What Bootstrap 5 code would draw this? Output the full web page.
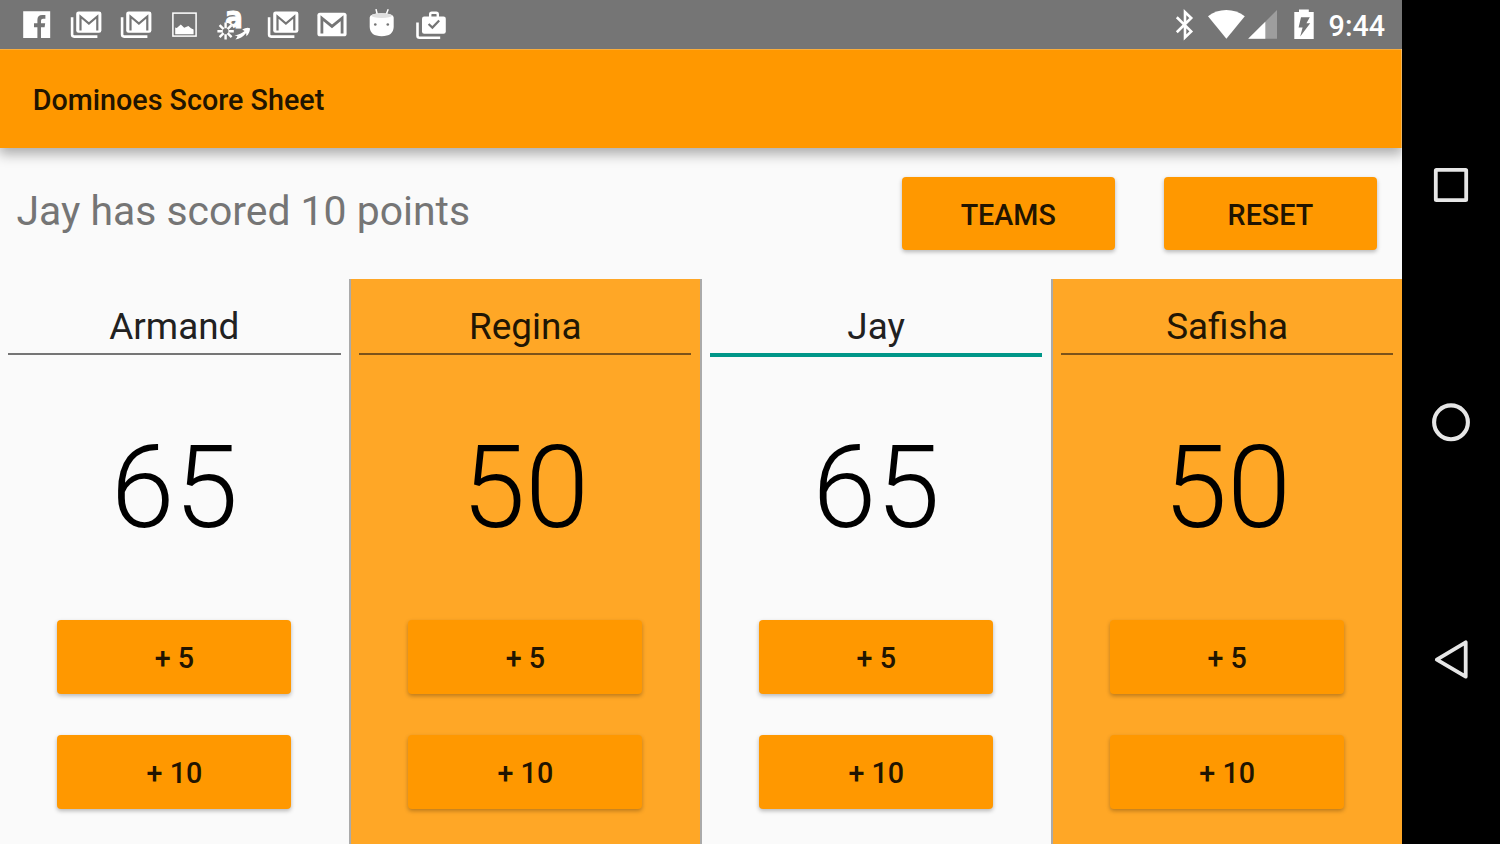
<!DOCTYPE html>
<html lang="en">
<head>
<meta charset="utf-8">
<meta name="viewport" content="width=device-width, initial-scale=1">
<title>Dominoes Score Sheet</title>
<link href="https://cdn.jsdelivr.net/npm/bootstrap@5.3.0/dist/css/bootstrap.min.css" rel="stylesheet">
<style>
  body { font-family: Roboto, "Liberation Sans", sans-serif; background: #fafafa; letter-spacing: 0; }
  .status-bar { height: 49.2px; background: #757575; padding-left: 12.3px; }
  .status-bar svg { display: block; flex: none; }
  .clock { font-size: 28.7px; font-weight: 500; line-height: 49px; margin-left: 13px; width: 73px; padding-top: 2px; }
  .app-bar { height: 98.4px; background: #ff9800; padding: 4px 0 0 32.8px; box-shadow: 0 5px 12px 1px rgba(0,0,0,.32); clip-path: inset(0 0 -30px 0); z-index: 2; }
  .app-title { font-size: 28.7px; font-weight: 500; color: #211400; line-height: 1; }
  .message-row { height: 131.4px; padding: 0 24.6px 0 16.4px; }
  .message-text { font-size: 40.9px; color: #757575; line-height: 48px; padding-bottom: 5px; }
  .btn-score { --bs-btn-bg: #ff9800; --bs-btn-color: #211400; --bs-btn-border-width: 0; --bs-btn-border-radius: 4px; --bs-btn-hover-bg: #fb8c00; --bs-btn-padding-x: 0; --bs-btn-padding-y: 0;
    --bs-btn-font-size: 28.7px; --bs-btn-font-weight: 500; --bs-btn-line-height: 73.8px; height: 73.8px; width: 234px; padding-top: 2.6px; box-shadow: 0 2px 4px rgba(0,0,0,.27); }
  .btn-action { width: 213.2px; }
  .actions { gap: 49px; padding-top: .6px; }
  .player { flex: 1 1 0; border-right: 2.05px solid #aaa; }
  .player:last-child { border-right: 0; }
  .player-alt { background: #ffa726; }
  .player-name { margin: 0 8.4px 0 8.2px; height: 76.4px; padding-top: 24px; font-size: 36.9px; line-height: 48px; color: #212121; border-bottom: 2px solid #757575; }
  .player-alt .player-name { color: #211604; border-color: #7c5219; }
  .player-name.focused { height: 78.4px; border-bottom: 4px solid #009688; margin-bottom: -2px; }
  .score { font-size: 114.8px; font-weight: 300; color: #000; line-height: 136px; margin-top: 64.4px; height: 200.1px; }
  .score-buttons { gap: 41.2px; }
  .nav-bar { width: 98.4px; background: #000; }
  .nav-cell { height: 237.4px; }
</style>
</head>
<body class="vh-100 overflow-hidden d-flex">
<svg width="0" height="0" class="position-absolute" aria-hidden="true">
  <symbol id="mail-stack" viewBox="0 0 49.2 49.2">
    <path d="M11.1 17.3V34.6Q11.1 36.6 13.1 36.6H36.4" fill="none" stroke="#fff" stroke-width="2.6"/>
    <rect x="15.2" y="11.4" width="25.2" height="21.4" rx="2.4" fill="#fff"/>
    <path d="M19.5 30.6V16.5L27.9 23.6L36.3 16.5V30.6" fill="none" stroke="#757575" stroke-width="2.2"/>
  </symbol>
</svg>
<div class="flex-grow-1 d-flex flex-column">
  <div class="status-bar d-flex align-items-start text-white flex-shrink-0">
    <svg width="49.2" height="49.2" viewBox="0 0 49.2 49.2"><path fill="#fff" d="M11.2 11.2H38.2V38H29V27.2H32.6L33.2 23.2H29V20.8Q29 18.8 31 18.8H33.4V15H30.2Q25.4 15 25.4 20V23.2H22V27.2H25.4V38H11.2Z"/></svg>
    <svg width="49.2" height="49.2"><use href="#mail-stack"/></svg>
    <svg width="49.2" height="49.2"><use href="#mail-stack"/></svg>
    <svg width="49.2" height="49.2" viewBox="0 0 49.2 49.2"><rect x="12.9" y="13.1" width="23.2" height="23" fill="none" stroke="#fff" stroke-width="1.5"/><path fill="#fff" d="M15.2 34.2V27.6L16.8 28L20.8 24.6L24.2 27.8L28.4 26L31 28.2L33.6 29.6V34.2Z"/></svg>
    <svg width="49.2" height="49.2" viewBox="0 0 49.2 49.2"><text transform="translate(16 27.9) scale(.88 1)" font-size="30" font-weight="700" font-family="DejaVu Sans, sans-serif" fill="#fff" stroke="#fff" stroke-width="1">a</text><circle cx="16.6" cy="31.2" r="8.4" fill="#757575"/><path d="M16.6 22.6V28.2M16.6 34.2V39.6M8.4 31.2H13.8M19.4 31.2H24.8M10.6 25.2L14.6 29.2M18.6 33.2L22.6 37.2M10.6 37.2L14.6 33.2M18.6 29.2L22.6 25.2" stroke="#fff" stroke-width="2.4"/><path fill="#fff" d="M25.4 35.6Q32 34.4 35.6 31L33.2 29.4Q38 26.8 41 28.2Q41.2 32.6 37.4 36.2L37.2 33Q32.6 38.6 26.4 39.4Q28.6 37.2 28.4 36Z"/></svg>
    <svg width="49.2" height="49.2"><use href="#mail-stack"/></svg>
    <svg width="49.2" height="49.2" viewBox="0 0 49.2 49.2"><rect x="10.4" y="12.7" width="29.2" height="23.6" rx="2.6" fill="#fff"/><path d="M14.9 33.6V18.2L25 26.4L35.1 18.2V33.6" fill="none" stroke="#757575" stroke-width="2.8"/></svg>
    <svg width="49.2" height="49.2" viewBox="0 0 49.2 49.2"><path d="M19 9.2L20.4 15M31.2 9.2L29 15" stroke="#fff" stroke-width="1.5"/><path fill="#fff" d="M12.7 17.4Q12.5 13.4 24.7 13.2Q36.8 13.4 36.7 17.4V27Q36.3 36.2 24.7 36.2Q13.1 36.2 12.7 27Z"/><ellipse cx="24.7" cy="15.6" rx="10.3" ry="2.4" fill="#e0e0e0"/><circle cx="18.3" cy="24.5" r="1.3" fill="#757575"/><circle cx="30.8" cy="24.5" r="1.3" fill="#757575"/></svg>
    <svg width="49.2" height="49.2" viewBox="0 0 49.2 49.2"><path d="M11.5 22.6V35.8Q11.5 37.8 13.5 37.8H34.2" fill="none" stroke="#fff" stroke-width="2.6"/><path d="M24.2 17.4V14.4Q24.2 12.8 25.8 12.8H30.2Q31.8 12.8 31.8 14.4V17.4" fill="none" stroke="#fff" stroke-width="2.4"/><rect x="16" y="16.6" width="23.8" height="17.2" rx="2.2" fill="#fff"/><path d="M22.6 24L26.4 27.6L33.2 20.6" fill="none" stroke="#757575" stroke-width="2.2"/></svg>
    <svg class="ms-auto" width="24" height="49" viewBox="1172 0 24 49"><path d="M1176.8 17.2L1191.2 31.4L1185 37.4V12L1191.2 18L1176.8 32.2" fill="none" stroke="#fff" stroke-width="2.6"/></svg>
    <svg width="50" height="49" viewBox="1196 0 50 49"><path fill="#fff" d="M1208 16.2Q1216 10 1226.3 10T1244.8 16.2L1226.4 38.8Z"/></svg>
    <svg width="34" height="49" viewBox="1246 0 34 49"><path fill="#fff" fill-opacity=".3" d="M1277 10V38.8H1248.2Z"/><path fill="#fff" d="M1265.3 21.7V38.8H1248.2Z"/></svg>
    <svg width="36" height="49" viewBox="1280 0 36 49"><path fill="#fff" d="M1299 9.4H1308.8V12H1313.7V39H1294.3V12H1299Z"/><path fill="#757575" d="M1301 17.2H1309.8L1306.4 23.2H1310.2L1300.2 36.4L1302.6 27.4H1298.6Z"/></svg>
    <div class="clock">9:44</div>
  </div>
  <header class="app-bar position-relative d-flex align-items-center flex-shrink-0">
    <h1 class="app-title mb-0">Dominoes Score Sheet</h1>
  </header>
  <div class="message-row d-flex align-items-center justify-content-between flex-shrink-0">
    <div class="message-text">Jay has scored 10 points</div>
    <div class="actions d-flex">
      <button class="btn btn-score btn-action" type="button">TEAMS</button>
      <button class="btn btn-score btn-action" type="button">RESET</button>
    </div>
  </div>
  <main class="d-flex flex-grow-1 text-center">
    <section class="player">
      <div class="player-name">Armand</div>
      <div class="score">65</div>
      <div class="score-buttons d-flex flex-column align-items-center">
        <button class="btn btn-score" type="button">+ 5</button>
        <button class="btn btn-score" type="button">+ 10</button>
      </div>
    </section>
    <section class="player player-alt">
      <div class="player-name">Regina</div>
      <div class="score">50</div>
      <div class="score-buttons d-flex flex-column align-items-center">
        <button class="btn btn-score" type="button">+ 5</button>
        <button class="btn btn-score" type="button">+ 10</button>
      </div>
    </section>
    <section class="player">
      <div class="player-name focused">Jay</div>
      <div class="score">65</div>
      <div class="score-buttons d-flex flex-column align-items-center">
        <button class="btn btn-score" type="button">+ 5</button>
        <button class="btn btn-score" type="button">+ 10</button>
      </div>
    </section>
    <section class="player player-alt">
      <div class="player-name">Safisha</div>
      <div class="score">50</div>
      <div class="score-buttons d-flex flex-column align-items-center">
        <button class="btn btn-score" type="button">+ 5</button>
        <button class="btn btn-score" type="button">+ 10</button>
      </div>
    </section>
  </main>
</div>
<nav class="nav-bar d-flex flex-column justify-content-center flex-shrink-0" aria-label="System navigation">
  <div class="nav-cell d-flex align-items-center justify-content-center"><svg width="48" height="48" viewBox="-24 -24 48 48"><rect x="-15.2" y="-15.2" width="30.4" height="30.4" rx=".6" fill="none" stroke="#e6e6e6" stroke-width="3.8"/></svg></div>
  <div class="nav-cell d-flex align-items-center justify-content-center"><svg width="48" height="48" viewBox="-24 -24 48 48"><circle cx="0" cy=".3" r="16.9" fill="none" stroke="#e6e6e6" stroke-width="4.1"/></svg></div>
  <div class="nav-cell d-flex align-items-center justify-content-center"><svg width="48" height="48" viewBox="-24 -24 48 48"><path d="M-14.2 .6L14.7 -16.7V17.7Z" fill="none" stroke="#e6e6e6" stroke-width="3.8" stroke-linejoin="round"/></svg></div>
</nav>
<script src="https://cdn.jsdelivr.net/npm/bootstrap@5.3.0/dist/js/bootstrap.bundle.min.js"></script>
</body>
</html>
